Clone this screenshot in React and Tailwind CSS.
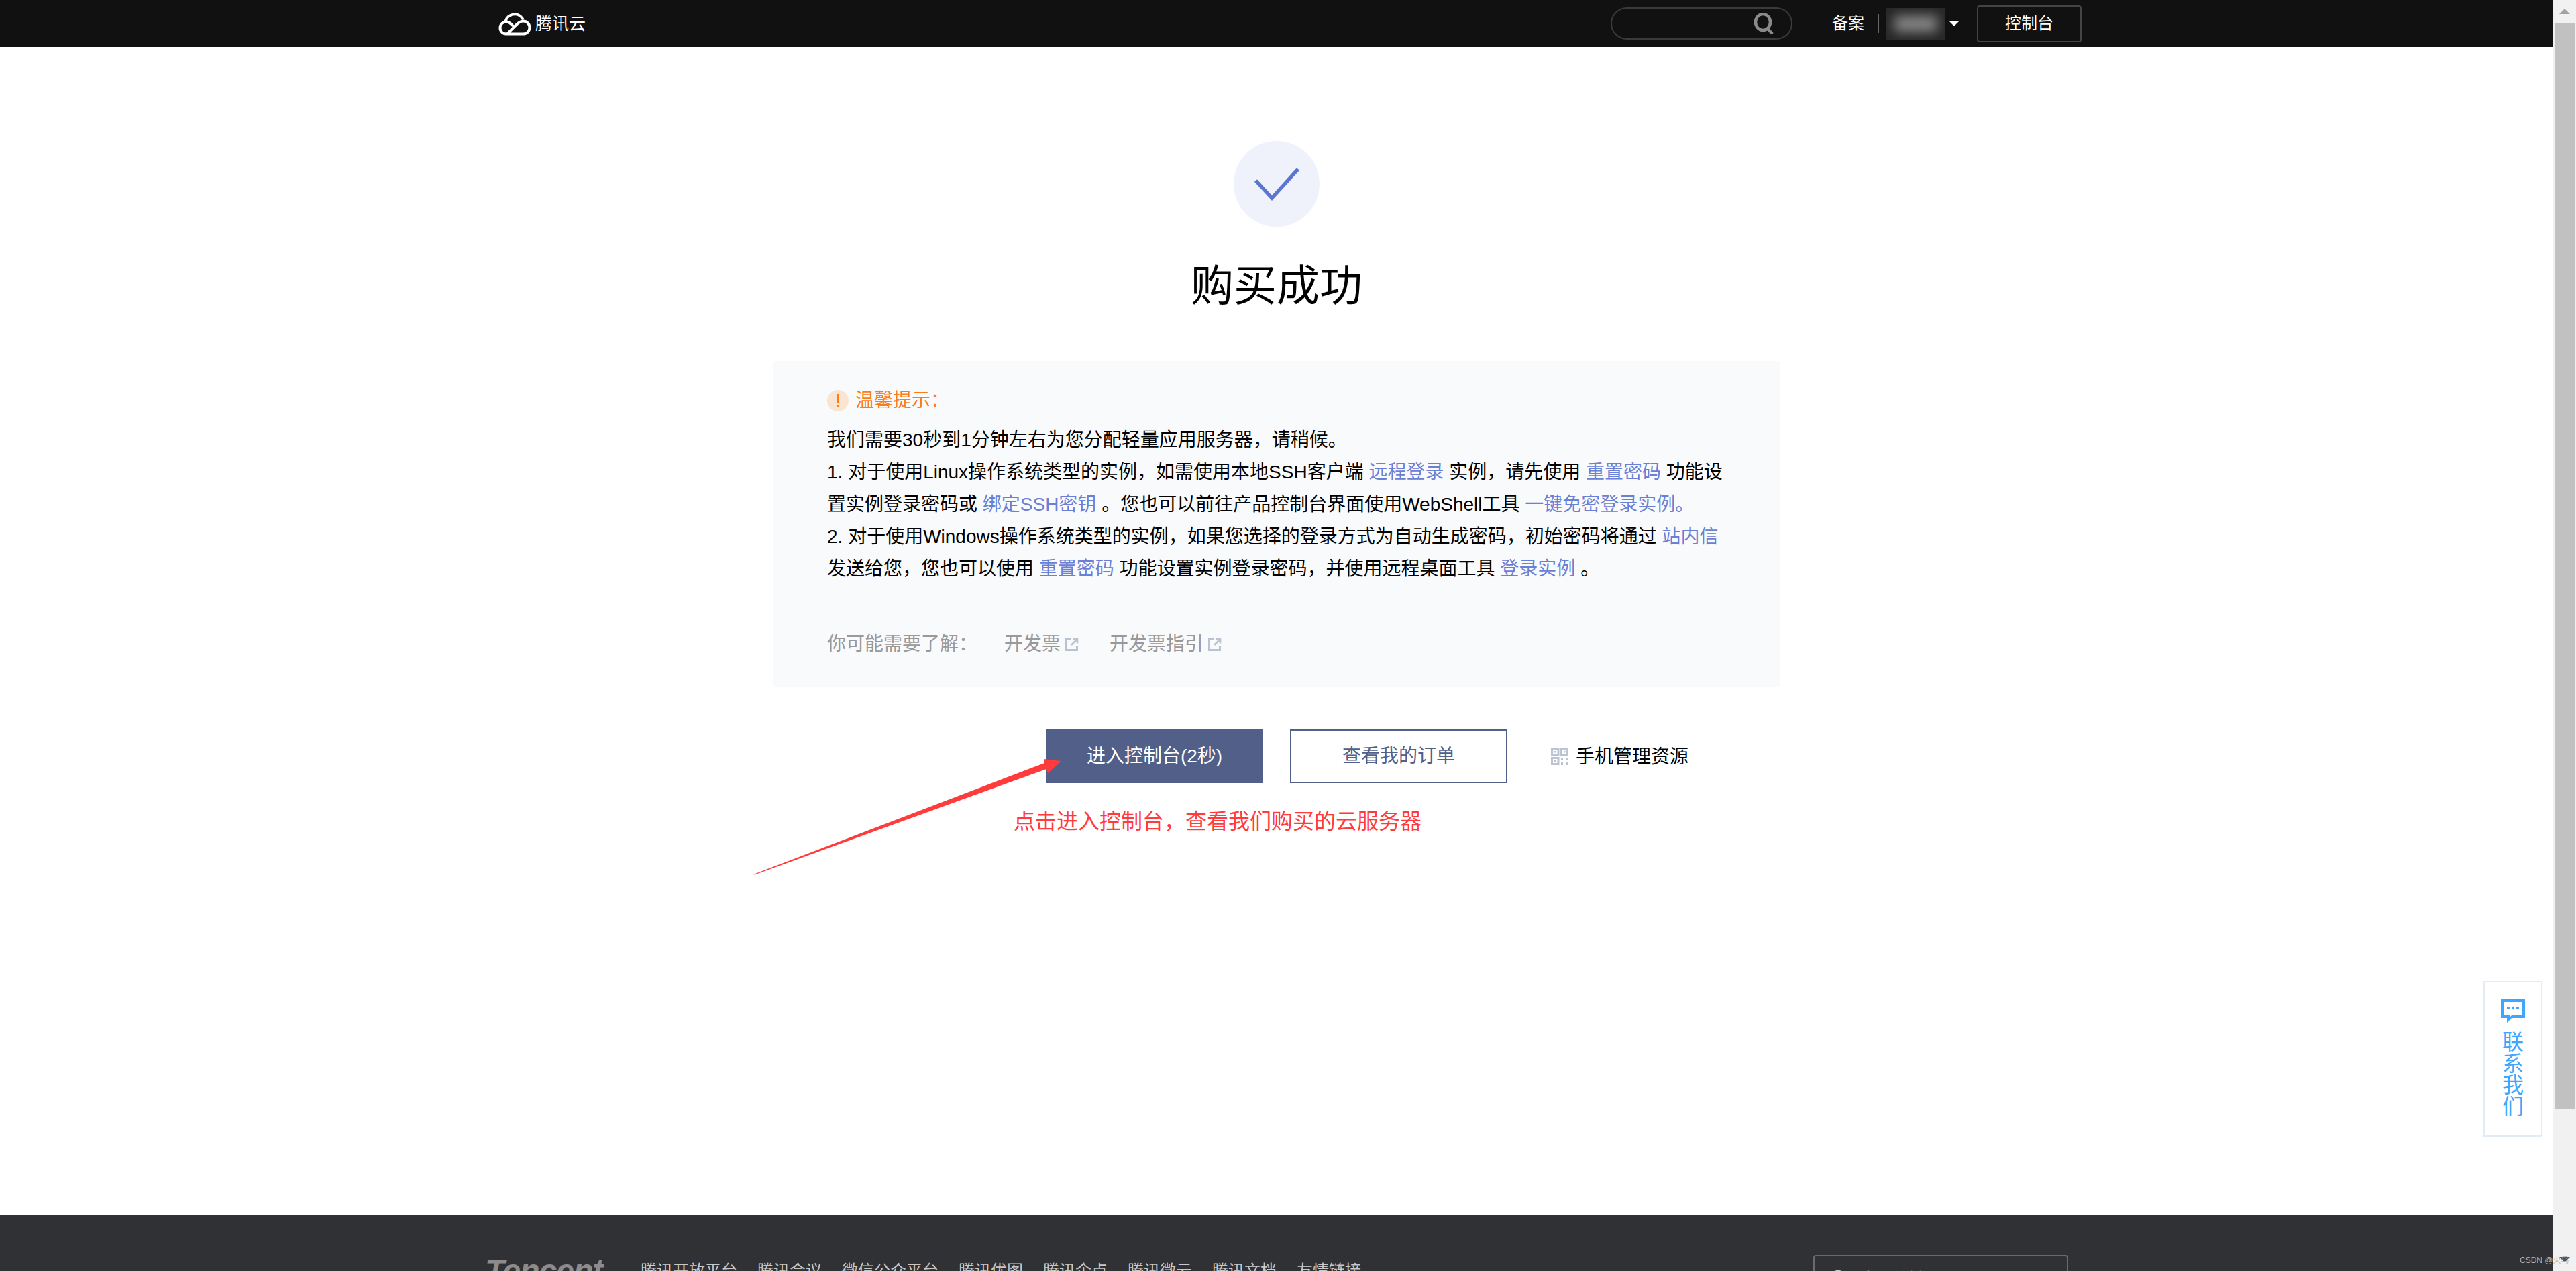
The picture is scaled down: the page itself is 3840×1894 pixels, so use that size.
import React from "react";

const FONT = { fontFamily: '"Liberation Sans", "Noto Sans CJK SC", sans-serif' };

const Ext = () => (
  <svg width="20" height="20" viewBox="0 0 20 20" fill="none" stroke="#bbc2d1" strokeWidth="3" className="ml-[7px]">
    <path d="M8 2.5H1.5V18.5H17.5V12" />
    <path d="M9 11L17 3M11.5 2H18V8.5" strokeWidth="2.6" />
  </svg>
);

const A = ({ children }) => <span className="text-[#6a80d4]">{children}</span>;

const footerLinks = ["腾讯开放平台", "腾讯会议", "微信公众平台", "腾讯优图", "腾讯企点", "腾讯微云", "腾讯文档", "友情链接"];

export default function App() {
  return (
    <div style={FONT} className="relative flex h-[1894px] w-full overflow-hidden bg-white text-black">
      <div className="flex h-full w-[3806px] flex-col">
        {/* header */}
        <header className="flex h-[70px] items-center bg-[#111111] pl-[743px] pr-[703px] text-white">
          <svg width="48" height="36" viewBox="0 0 48 36" fill="none" stroke="#fff" strokeWidth="4" strokeLinecap="round">
            <path d="M10.5 15A14 14 0 0 1 36 11" />
            <path d="M21 21C18 17.5 15 15.5 11.5 15.5A8.8 8.8 0 0 0 11.5 33.5H37A9.5 9.5 0 0 0 37 14.5C32 14.5 29 17.5 26 20.5L13.5 33" />
          </svg>
          <span className="ml-[7px] text-[25px] font-normal leading-none">腾讯云</span>
          <div className="ml-auto flex items-center">
            <div className="flex h-[48px] w-[271px] items-center justify-end rounded-full border-2 border-[#3a3a3a] pr-[26px]">
              <svg width="30" height="32" viewBox="0 0 30 32" fill="none" stroke="#8a8a8a" strokeWidth="4.5" strokeLinecap="round">
                <ellipse cx="14" cy="14" rx="11" ry="12" />
                <path d="M21 24L27 30" />
              </svg>
            </div>
            <span className="ml-[59px] text-[24px] leading-none">备案</span>
            <span className="ml-[20px] h-[28px] w-[2px] bg-[#666666]" />
            <div className="relative ml-[11px] h-[47px] w-[88px] overflow-hidden bg-[#262626]">
              <div className="absolute left-[12px] top-[12px] h-[23px] w-[64px] bg-[#8a8a8a] blur-[9px]" />
            </div>
            <svg width="16" height="8" viewBox="0 0 16 8" className="ml-[5px]">
              <path d="M0 0H16L8 8Z" fill="#fff" />
            </svg>
            <div className="ml-[26px] flex h-[55px] w-[156px] items-center justify-center rounded-[4px] border-2 border-[#444444] text-[24px] leading-none">
              控制台
            </div>
          </div>
        </header>

        {/* content */}
        <main className="flex flex-1 flex-col items-center">
          <div className="mt-[140px] flex h-[128px] w-[128px] items-center justify-center rounded-full bg-[#eff2fb]">
            <svg width="128" height="128" viewBox="0 0 128 128" fill="none" stroke="#5c76cf" strokeWidth="5.5">
              <path d="M33 59L57 85L96 42" />
            </svg>
          </div>
          <h1 className="mt-[40px] h-[96px] text-[64px] font-normal leading-[96px]">购买成功</h1>

          <section className="mt-[64px] h-[485px] w-[1500px] bg-[#f9fafc] px-[80px] pt-[43px] text-[28px] leading-[48px]">
            <div className="flex h-[32px] items-center text-[#ff7a1a]">
              <svg width="32" height="32" viewBox="0 0 32 32">
                <circle cx="16" cy="16" r="16" fill="#fae4d2" />
                <path d="M15 6H17V20H15ZM15 23H17V26H15Z" fill="#ff7a1a" />
              </svg>
              <span className="ml-[10px]">温馨提示：</span>
            </div>
            <div className="mt-[19px] whitespace-pre">
              <div>我们需要30秒到1分钟左右为您分配轻量应用服务器，请稍候。</div>
              <div>1. 对于使用Linux操作系统类型的实例，如需使用本地SSH客户端 <A>远程登录</A> 实例，请先使用 <A>重置密码</A> 功能设</div>
              <div>置实例登录密码或 <A>绑定SSH密钥</A> 。您也可以前往产品控制台界面使用WebShell工具 <A>一键免密登录实例。</A></div>
              <div>2. 对于使用Windows操作系统类型的实例，如果您选择的登录方式为自动生成密码，初始密码将通过 <A>站内信</A></div>
              <div>发送给您，您也可以使用 <A>重置密码</A> 功能设置实例登录密码，并使用远程桌面工具 <A>登录实例</A> 。</div>
            </div>
            <div className="mt-[64px] flex items-center text-[#999999]">
              <span className="w-[264px]">你可能需要了解：</span>
              <span>开发票</span>
              <Ext />
              <span className="ml-[46px]">开发票指引</span>
              <Ext />
            </div>
          </section>

          <div className="w-[1500px]">
            <div className="mt-[64px] flex items-center pl-[406px] text-[28px]">
              <div className="flex h-[80px] w-[324px] items-center justify-center bg-[#525f89] text-white">进入控制台(2秒)</div>
              <div className="ml-[40px] flex h-[80px] w-[324px] items-center justify-center border-2 border-[#525f89] text-[#525f89]">查看我的订单</div>
              <svg width="26" height="26" viewBox="0 0 26 26" fill="none" stroke="#bcc3d3" className="ml-[65px]">
                <path d="M1.5 1.5H11V11H1.5ZM15.5 1.5H24.5V11H15.5ZM1.5 15.5H11V24.5H1.5Z" strokeWidth="3" />
                <path d="M5 5H7.5V7.5H5ZM19 5H21.5V7.5H19ZM5 19H7.5V21.5H5ZM15 15H18V18H15ZM22 15H26V18H22ZM15 22H18V26H15ZM22 22H26V26H22Z" fill="#bcc3d3" stroke="none" />
              </svg>
              <span className="ml-[11px] pt-[2px]">手机管理资源</span>
            </div>
            <div className="ml-[358px] mt-[33px] text-[32px] leading-[48px] text-[#ff3b3b]">点击进入控制台，查看我们购买的云服务器</div>
          </div>
        </main>

        {/* footer */}
        <footer className="flex h-[84px] items-start overflow-hidden bg-[#303135] pl-[723px] pr-[723px] pt-[60px]">
          <div className="w-[232px] text-[48px] font-bold italic leading-[48px] tracking-[-1px] text-[#8c8c8c]">Tencent</div>
          <div className="mt-[6px] flex gap-[30px] text-[24px] leading-[36px] text-[#c8c8c8]">
            {footerLinks.map((t) => (
              <span key={t}>{t}</span>
            ))}
          </div>
          <div className="ml-auto flex h-[60px] w-[380px] items-start rounded-[4px] border-2 border-[#6a6a6a] pl-[25px] pt-[16px] text-[24px] leading-[36px] text-[#c8c8c8]">
            <svg width="22" height="24" viewBox="0 0 22 24" fill="none" stroke="#c8c8c8" strokeWidth="3" className="mt-[3px]">
              <circle cx="10" cy="11" r="8" />
            </svg>
            <span className="ml-[21px]">本页关键词</span>
          </div>
        </footer>
      </div>

      {/* scrollbar */}
      <div className="flex h-full w-[34px] flex-col items-center bg-[#f1f1f1]">
        <div className="flex h-[34px] items-center justify-center">
          <svg width="16" height="8" viewBox="0 0 16 8"><path d="M0 8H16L8 0Z" fill="#a3a3a3" /></svg>
        </div>
        <div className="h-[1618px] w-[30px] bg-[#c1c1c1]" />
        <div className="mt-auto flex h-[34px] items-center justify-center">
          <svg width="16" height="8" viewBox="0 0 16 8"><path d="M0 0H16L8 8Z" fill="#505050" /></svg>
        </div>
      </div>

      {/* annotation arrow */}
      <svg className="absolute left-[1120px] top-[1125px]" width="470" height="182" viewBox="1120 1125 470 182">
        <path d="M1123 1303L1125 1303.5L1560 1146L1562 1152L1582 1134L1556 1131L1557 1137Z" fill="#ff3b3b" />
      </svg>

      {/* contact widget */}
      <div className="absolute right-[50px] top-[1462px] flex h-[232px] w-[88px] flex-col items-center border-2 border-[#e3ebf4] bg-white pt-[24px]">
        <svg width="36" height="36" viewBox="0 0 36 36">
          <path fillRule="evenodd" d="M0 0H36V29H16L9 36V29H0ZM5 5V25H14V27L16 25H31V5Z" fill="#3ea6ff" />
          <circle cx="11" cy="14" r="2.2" fill="#3ea6ff" />
          <circle cx="18" cy="14" r="2.2" fill="#3ea6ff" />
          <circle cx="25" cy="14" r="2.2" fill="#3ea6ff" />
        </svg>
        <div className="mt-[13px] flex flex-col text-[32px] leading-[32px] text-[#3ea6ff]">
          <span>联</span>
          <span>系</span>
          <span>我</span>
          <span>们</span>
        </div>
      </div>

      {/* watermark */}
      <div className="absolute left-[3756px] top-[1871px] text-[12px] leading-[14px] text-[#b4b4b4]">CSDN @火鸟</div>
    </div>
  );
}
